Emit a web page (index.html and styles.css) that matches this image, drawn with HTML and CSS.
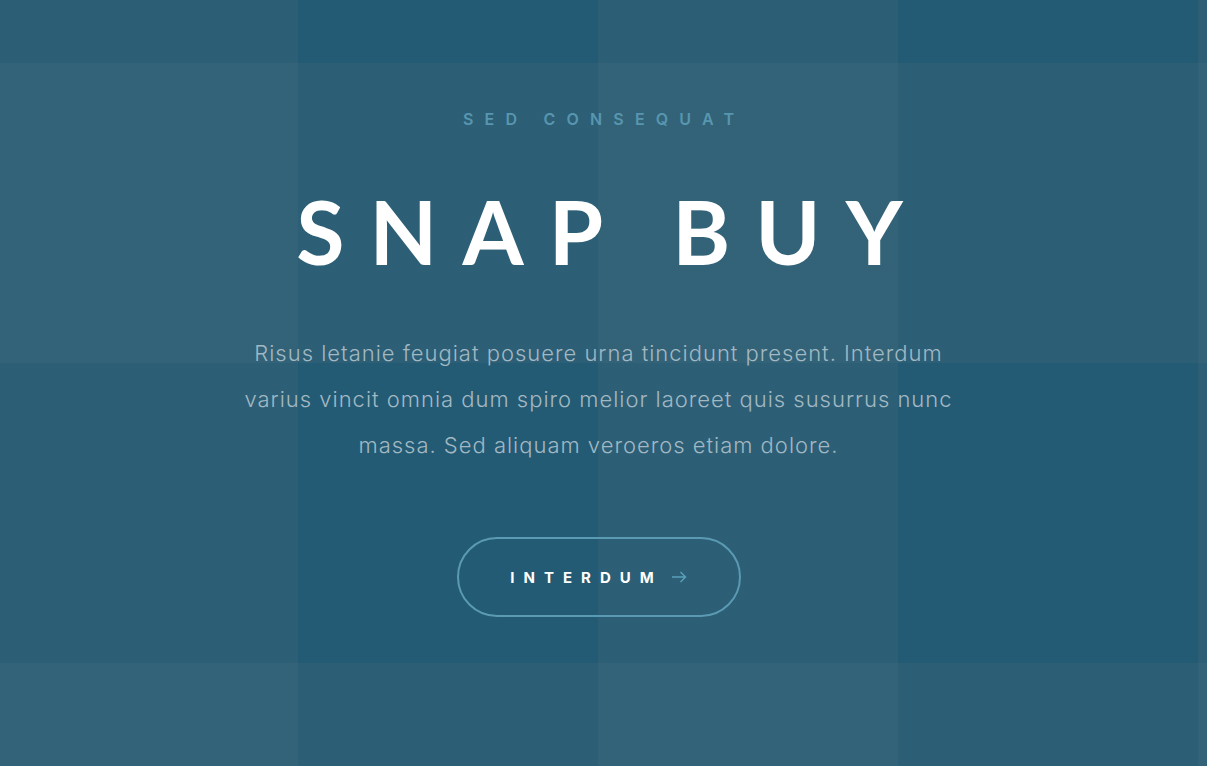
FILE: index.html
```html
<!DOCTYPE html>
<html lang="en">
<head>
<meta charset="utf-8">
<title>Snap Buy</title>
<link rel="stylesheet" href="styles.css">
</head>
<body>
<main class="hero">
  <p class="eyebrow">Sed consequat</p>
  <h1 class="title">Snap Buy</h1>
  <p class="lead">Risus letanie feugiat posuere urna tincidunt present. Interdum varius vincit omnia dum spiro melior laoreet quis susurrus nunc massa. Sed aliquam veroeros etiam dolore.</p>
  <a class="button" href="#">
    <span class="button-label">Interdum</span>
    <svg class="button-arrow" width="16" height="12" viewBox="0 0 16 12" aria-hidden="true"><path d="M1 6H14.5M9.5 1L14.5 6L9.5 11" fill="none" stroke="currentColor" stroke-width="1.4"/></svg>
  </a>
</main>
</body>
</html>
```
FILE: styles.css
```css
html, body {
  margin: 0;
  padding: 0;
  height: 100%;
}
body {
  background-color: #245b74;
  background-image:
    linear-gradient(to right, rgba(90, 120, 130, 0.15) 0 300px, transparent 300px 600px),
    linear-gradient(to bottom, rgba(90, 120, 130, 0.15) 0 300px, transparent 300px 600px);
  background-size: 600px 100%, 100% 600px;
  background-position: -2px 0, 0 63px;
  background-repeat: repeat-x, repeat-y;
  font-family: "Inter", "Liberation Sans", sans-serif;
  overflow: hidden;
}
.hero {
  display: flex;
  flex-direction: column;
  align-items: center;
  text-align: center;
  padding: 108px 10px 0 0;
  box-sizing: border-box;
  min-height: 100%;
}
.eyebrow {
  margin: 0 -0.7em 0 0;
  font-size: 16px;
  font-weight: 600;
  line-height: 22px;
  letter-spacing: 0.7em;
  text-transform: uppercase;
  color: #5896b0;
}
.title {
  margin: 51px -0.285em 0 0;
  padding-left: 2px;
  font-family: "Lato", "Inter", sans-serif;
  font-size: 88px;
  font-weight: 700;
  line-height: 100px;
  letter-spacing: 0.285em;
  text-transform: uppercase;
  color: #ffffff;
}
.lead {
  margin: 49px 0 0;
  max-width: 714px;
  font-size: 22px;
  font-weight: 300;
  line-height: 46px;
  letter-spacing: 0.045em;
  color: #a2b8c3;
}
.button {
  margin-top: 69px;
  display: flex;
  align-items: center;
  justify-content: center;
  gap: 8px;
  width: 284px;
  height: 80px;
  box-sizing: border-box;
  border: 2px solid #5b9ab3;
  border-radius: 40px;
  text-decoration: none;
}
.button-label {
  font-size: 15px;
  font-weight: 700;
  letter-spacing: 0.6em;
  text-transform: uppercase;
  color: #ffffff;
}
.button-arrow {
  color: #5aa0bb;
}
```
